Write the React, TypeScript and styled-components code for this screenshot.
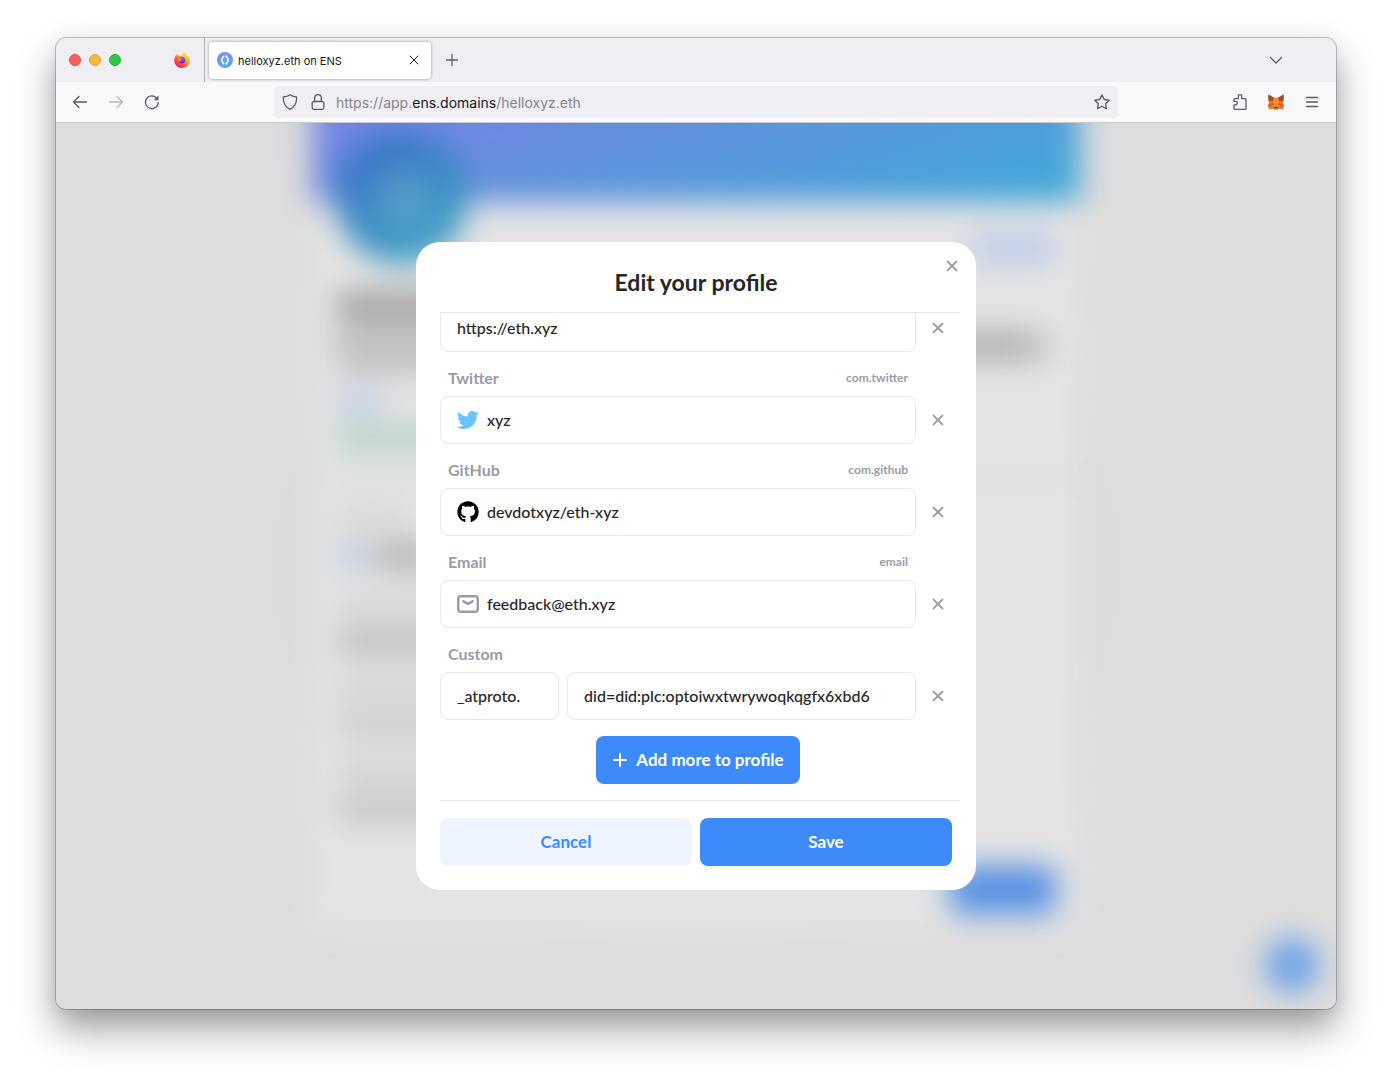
import React from 'react';
import styled, { createGlobalStyle } from 'styled-components';
import { FaGithub, FaTwitter } from 'react-icons/fa';

const GlobalStyle = createGlobalStyle`
  *, *::before, *::after { box-sizing: border-box; }
  body { margin: 0; background: #fff; }
  button, input { font: inherit; color: inherit; }
`;

const uiFont = `Inter, "Liberation Sans", sans-serif`;
const brandFont = `Lato, Inter, sans-serif`;

/* ---------- browser window ---------- */

const Desktop = styled.div`
  display: flex;
  min-height: 100vh;
  padding: 38px 56px 74px;
  font-family: ${uiFont};
`;

const Window = styled.div`
  flex: 1;
  min-width: 0;
  display: flex;
  flex-direction: column;
  overflow: hidden;
  border-radius: 10px;
  background: #ddd;
  box-shadow:
    0 0 0 1px rgba(0, 0, 0, 0.22),
    0 4px 20px rgba(0, 0, 0, 0.08),
    0 20px 38px rgba(0, 0, 0, 0.38);
`;

const TabStrip = styled.div`
  display: flex;
  align-items: center;
  height: 44px;
  background: #efeef3;
  color: #5b5b66;
`;

const TrafficLights = styled.div`
  display: flex;
  gap: 8px;
  padding-left: 13px;
`;

const Light = styled.button<{ $fill: string; $edge: string }>`
  width: 12px;
  height: 12px;
  padding: 0;
  border: 1px solid ${(p) => p.$edge};
  border-radius: 50%;
  background: ${(p) => p.$fill};
`;

const PinnedTab = styled.button`
  display: flex;
  align-items: center;
  justify-content: center;
  align-self: stretch;
  width: 46px;
  margin-left: 38px;
  padding: 0;
  border: 0;
  border-right: 1px solid #b4b3b9;
  margin-right: 4px;
  background: none;
`;

const ActiveTab = styled.div`
  display: flex;
  align-items: center;
  gap: 5px;
  width: 222px;
  height: 37px;
  padding: 0 8px;
  border-radius: 4px;
  background: #fff;
  box-shadow: 0 0 3px rgba(0, 0, 0, 0.4);
  color: #15141a;
  font-size: 11px;
  line-height: 16px;
`;

const TabTitle = styled.span`
  flex: 1;
  padding-top: 2px;
  white-space: nowrap;
`;

const ChromeButton = styled.button<{ $w?: number; $dim?: boolean }>`
  display: flex;
  align-items: center;
  justify-content: center;
  flex: none;
  width: ${(p) => p.$w ?? 36}px;
  height: 32px;
  padding: 0;
  border: 0;
  background: none;
  color: inherit;
  opacity: ${(p) => (p.$dim ? 0.4 : 1)};
`;

const TabListSlot = styled.div`
  display: flex;
  margin-left: auto;
  padding-right: 42px;
`;

const Toolbar = styled.div`
  display: flex;
  align-items: center;
  height: 41px;
  padding: 0 6px;
  border-bottom: 1px solid #c9c9cc;
  background: #f9f9fb;
  color: #5b5b66;
`;

const Spacer = styled.div`
  flex: 0 1 104px;
`;

const AddressBar = styled.div`
  display: flex;
  align-items: center;
  flex: 1;
  min-width: 0;
  height: 32px;
  padding: 0 0 0 2px;
  border-radius: 4px;
  background: #f0eff4;
`;

const Address = styled.div`
  flex: 1;
  padding: 2px 0 0 4px;
  outline: 0;
  color: #85848b;
  font-size: 14px;
  line-height: 20px;
  white-space: nowrap;
  strong { color: #15141a; font-weight: 400; }
`;

/* ---------- page behind the dialog ---------- */

const Viewport = styled.main`
  position: relative;
  flex: 1;
  display: flex;
  align-items: center;
  justify-content: center;
  overflow: hidden;
  background: radial-gradient(ellipse at center, #d9dadd 30%, #dbdcde 45%, #dddedd 58%, #dddddd 62%);
`;

const Backdrop = styled.div`
  position: absolute;
  inset: 0;
  display: flex;
  justify-content: center;
  align-items: flex-start;
  overflow: hidden;
`;

const Sheet = styled.div`
  display: flex;
  flex-direction: column;
  width: 768px;
  margin-top: -60px;
  background: #e4e4e4;
  filter: blur(15px);
`;

const Banner = styled.div`
  height: 139px;
  background: linear-gradient(160deg, #7a80e2 0%, #6b8adf 32%, #5698dc 62%, #3fa9d6 100%);
`;

const SheetRow = styled.div<{ $h: number; $mt?: number; $align?: string }>`
  display: flex;
  align-items: ${(p) => p.$align ?? 'center'};
  justify-content: space-between;
  height: ${(p) => p.$h}px;
  margin-top: ${(p) => p.$mt ?? 0}px;
  padding: 0 24px;
`;

const Avatar = styled.div`
  width: 132px;
  height: 132px;
  border-radius: 50%;
  background:
    radial-gradient(circle at 50% 50%, rgba(255, 255, 255, 0.2) 0, rgba(255, 255, 255, 0) 50%),
    linear-gradient(150deg, #3473c4 15%, #3a90c3 60%, #45a9c6 100%);
`;

const Smudge = styled.div<{ $w: number; $h: number; $c: string }>`
  width: ${(p) => p.$w}px;
  height: ${(p) => p.$h}px;
  border-radius: 8px;
  background: ${(p) => p.$c};
`;

const SheetDivider = styled.div`
  height: 12px;
  margin-top: 20px;
  background: #dcdde0;
`;

const HelpBubble = styled.div`
  position: absolute;
  right: 16px;
  bottom: 16px;
  width: 56px;
  height: 56px;
  border-radius: 50%;
  background: #74a5e8;
  filter: blur(14px);
`;

/* ---------- dialog ---------- */

const Dialog = styled.form`
  position: relative;
  width: 560px;
  max-width: 100%;
  border-radius: 24px;
  background: #fff;
  color: #262626;
  font-family: ${brandFont};
  font-size: 16px;
  line-height: 20px;
`;

const DialogTitle = styled.h1`
  margin: 0;
  padding: 24px 24px 14px;
  font-size: 23px;
  line-height: 32px;
  font-weight: 700;
  text-align: center;
`;

const IconButton = styled.button`
  display: flex;
  align-items: center;
  justify-content: center;
  width: 36px;
  height: 36px;
  padding: 0;
  border: 0;
  background: none;
  color: #9b9ba7;
`;

const DialogClose = styled(IconButton)`
  position: absolute;
  top: 6px;
  right: 6px;
`;

const Fields = styled.div`
  display: flex;
  flex-direction: column;
  justify-content: flex-end;
  gap: 16px;
  height: 489px;
  margin: 0 16px 0 24px;
  padding: 0 4px 16px 0;
  overflow: hidden;
  border: solid #e8e8e8;
  border-width: 1px 0;
`;

const Field = styled.div`
  flex: none;
  display: grid;
  grid-template-columns: 1fr 36px;
  column-gap: 4px;
  row-gap: 8px;
  align-items: center;
`;

const FieldHead = styled.div`
  display: flex;
  justify-content: space-between;
  grid-column: 1;
  padding: 0 8px;
  color: #9b9ba7;
  font-weight: 700;
`;

const RecordKey = styled.span`
  font-size: 12px;
`;

const Inputs = styled.div<{ $split?: boolean }>`
  grid-column: 1;
  display: grid;
  grid-template-columns: ${(p) => (p.$split ? '119px 1fr' : '1fr')};
  gap: 8px;
`;

const InputBox = styled.div`
  display: flex;
  align-items: center;
  gap: 8px;
  min-width: 0;
  height: 48px;
  padding: 0 16px;
  border: 1px solid #e8e8e8;
  border-radius: 8px;
  svg { flex: none; }
`;

const TextInput = styled.input`
  flex: 1;
  min-width: 0;
  width: 100%;
  padding: 0;
  border: 0;
  outline: 0;
  background: none;
  font-weight: 500;
`;

const Action = styled.button<{ $soft?: boolean }>`
  display: flex;
  align-items: center;
  justify-content: center;
  flex: none;
  gap: 8px;
  height: 48px;
  padding: 0 16px;
  border: 0;
  border-radius: 8px;
  background: ${(p) => (p.$soft ? '#eef5ff' : '#3d8bfb')};
  color: ${(p) => (p.$soft ? '#3d8bfb' : '#fff')};
  font-size: 17px;
  font-weight: 700;
`;

const AddAction = styled(Action)`
  align-self: center;
`;

const DialogFooter = styled.div`
  display: grid;
  grid-template-columns: 1fr 1fr;
  gap: 8px;
  padding: 17px 24px 24px;
`;

/* ---------- icons ---------- */

type StrokeProps = { d: string; size?: number; box?: number; width?: number };

const Stroke = ({ d, size = 16, box = 16, width = 1 }: StrokeProps) => (
  <svg width={size} height={size} viewBox={`0 0 ${box} ${box}`} fill="none" stroke="currentColor"
    strokeWidth={width} strokeLinecap="round" strokeLinejoin="round" aria-hidden="true">
    <path d={d} />
  </svg>
);

const Cross = () => <Stroke size={12} box={12} width={2} d="M1.6 1.6l8.8 8.8M10.4 1.6l-8.8 8.8" />;

const FirefoxLogo = () => (
  <svg width="16" height="16" viewBox="0 0 16 16" aria-hidden="true">
    <defs>
      <linearGradient id="ff-body" x1="0.85" y1="0.05" x2="0.2" y2="0.95">
        <stop offset="0" stopColor="#fff04f" />
        <stop offset="0.3" stopColor="#ffbd2e" />
        <stop offset="0.6" stopColor="#ff6a35" />
        <stop offset="1" stopColor="#f0107a" />
      </linearGradient>
      <linearGradient id="ff-globe" x1="0.7" y1="0" x2="0.3" y2="1">
        <stop offset="0" stopColor="#9059ff" />
        <stop offset="1" stopColor="#4a2fb8" />
      </linearGradient>
    </defs>
    <path fill="url(#ff-body)" d="M15.4 5.9c-.4-.9-1-1.6-1.6-2 .3.5.5 1 .5 1.400C13.400 3 11.500 2.300 10.800 0 9.200.9 8.600 2.300 8.500 3.400c-.9 0-1.800.3-2.500.8-.5-.2-.7-1-.5-1.800-1 .4-1.700 1.100-2.200 1.700-.4-.5-.4-1.700-.2-2.200C1.900 2.700.6 4.600.3 7c-.7 4.800 3 9 7.700 9 4.400 0 8-3.600 8-8 0-.8-.2-1.500-.6-2.100z" />
    <circle cx="8" cy="8.300" r="3.300" fill="url(#ff-globe)" />
    <path fill="#ff8a30" d="M3.600 6.200c1-.7 2.300-.4 3 .4.600.1 1 .1 1.500.3-.3.700-1.100.8-1.500 1.200-.2.600.3 1 1 1-.9.900-2.500.5-3.100-.5-.7-.7-1-1.500-.9-2.400z" />
  </svg>
);

const EnsLogo = () => (
  <svg width="16" height="16" viewBox="0 0 16 16" aria-hidden="true">
    <defs>
      <linearGradient id="ens-fill" x1="0.2" y1="0" x2="0.8" y2="1">
        <stop offset="0" stopColor="#7e8df5" />
        <stop offset="1" stopColor="#51aef2" />
      </linearGradient>
    </defs>
    <circle cx="8" cy="8" r="8" fill="url(#ens-fill)" />
    <path fill="none" stroke="#fff" strokeWidth="1.600" strokeLinecap="round" strokeLinejoin="round"
      d="M6.800 4.200C5.500 5.700 4.700 6.700 4.700 8s.8 2.300 2.100 3.800M9.200 4.200c1.300 1.500 2.100 2.500 2.100 3.800s-.8 2.300-2.100 3.800" />
  </svg>
);

const FoxLogo = () => (
  <svg width="16" height="16" viewBox="0 0 16 16" aria-hidden="true">
    <path fill="#ec7a2c" d="M.4.600 6 3.700h4L15.600.6v6.600l-.5 2.300.9 2.800-1.200 3.200-3.500-.8L9.600 16H6.400l-1.700-1.300-3.500.8L0 12.300l.9-2.800-.5-2.300z" />
    <path fill="#92502b" d="M.4.600 6 3.700 4.600 7.200.900 6.800.2 4.200zM15.600.6 10 3.700l1.400 3.500 3.700-.4.700-2.600z" />
    <path fill="#f58b30" d="M6 3.700h4l1.300 5.600-1.500 3.500H6.200L4.700 9.300z" />
    <path fill="#d8681f" d="M.9 9.500l3.100.3-.3 2.900-3.700-.4zM15.100 9.500l-3.100.3.300 2.900 3.700-.4z" />
    <path fill="#5d3a22" d="m4.200 9.200 1.900.9-1.600.6zM11.800 9.200l-1.900.9 1.600.6z" />
    <path fill="#201c1a" d="M6.700 12.900h2.600l.3 1.500H6.400z" />
    <path fill="#d6c4b5" d="M6.400 14.400h3.200l-.4 1.200H6.800z" />
  </svg>
);

const MailIcon = () => (
  <svg width="22" height="22" viewBox="0 0 22 22" fill="none" stroke="#9b9ba7" strokeWidth="2.400"
    strokeLinecap="round" strokeLinejoin="round" aria-hidden="true">
    <rect x="1.200" y="3.200" width="19.600" height="15.600" rx="2.500" />
    <path d="M6.200 8.200l4.800 2.700 4.800-2.700" />
  </svg>
);

/* ---------- content ---------- */

type RecordRow = { id: string; label?: string; recordKey?: string; value: string; icon?: React.ReactNode };

const records: RecordRow[] = [
  { id: 'url', value: 'https://eth.xyz' },
  { id: 'twitter', label: 'Twitter', recordKey: 'com.twitter', value: 'xyz', icon: <FaTwitter size={22} color="#68c5fb" /> },
  { id: 'github', label: 'GitHub', recordKey: 'com.github', value: 'devdotxyz/eth-xyz', icon: <FaGithub size={22} color="#000" /> },
  { id: 'email', label: 'Email', recordKey: 'email', value: 'feedback@eth.xyz', icon: <MailIcon /> },
];

const BlurredProfile = () => (
  <Backdrop aria-hidden="true">
    <Sheet>
      <Banner />
      <SheetRow $h={132} $mt={-70} $align="flex-end">
        <Avatar />
        <Smudge $w={86} $h={32} $c="#bccde8" />
      </SheetRow>
      <SheetRow $h={24} $mt={28}><Smudge $w={240} $h={24} $c="#9c9c9c" /></SheetRow>
      <SheetRow $h={60}>
        <Smudge $w={320} $h={56} $c="#c2c2c2" />
        <Smudge $w={130} $h={28} $c="linear-gradient(90deg, #acacac 100px, #e0e0e0 130px)" />
      </SheetRow>
      <SheetRow $h={28} $mt={12}><Smudge $w={46} $h={22} $c="#bccbe8" /></SheetRow>
      <SheetRow $h={28} $mt={8}><Smudge $w={180} $h={28} $c="#b8d5c7" /></SheetRow>
      <SheetDivider />
      <SheetRow $h={20} $mt={24}><Smudge $w={70} $h={14} $c="#cdcdcd" /></SheetRow>
      <SheetRow $h={36} $mt={10}>
        <Smudge $w={32} $h={24} $c="#b4cde0" />
        <Smudge $w={682} $h={26} $c="linear-gradient(90deg, #b0b0b0 44px, #e4e4e4 100px)" />
      </SheetRow>
      <SheetRow $h={24} $mt={20}><Smudge $w={110} $h={20} $c="#d3d3d3" /></SheetRow>
      <SheetRow $h={32} $mt={8}><Smudge $w={180} $h={26} $c="#bebebe" /></SheetRow>
      <SheetRow $h={24} $mt={20}><Smudge $w={130} $h={24} $c="#d2d2d2" /></SheetRow>
      <SheetRow $h={32} $mt={8}><Smudge $w={180} $h={24} $c="#cbcbcb" /></SheetRow>
      <SheetRow $h={24} $mt={20}><Smudge $w={110} $h={24} $c="#d0d0d0" /></SheetRow>
      <SheetRow $h={32} $mt={8}><Smudge $w={180} $h={24} $c="#c3c3c3" /></SheetRow>
      <SheetRow $h={62} $mt={40} $align="flex-start">
        <span />
        <Smudge $w={106} $h={48} $c="#5590e3" />
      </SheetRow>
    </Sheet>
    <HelpBubble />
  </Backdrop>
);

const EditProfileDialog = () => (
  <Dialog role="dialog" aria-labelledby="dialog-title" onSubmit={(e) => e.preventDefault()}>
    <DialogTitle id="dialog-title">Edit your profile</DialogTitle>
    <DialogClose type="button" aria-label="Close"><Cross /></DialogClose>
    <Fields>
      {records.map((r) => (
        <Field key={r.id}>
          {r.label && (
            <FieldHead>
              <label htmlFor={r.id}>{r.label}</label>
              <RecordKey>{r.recordKey}</RecordKey>
            </FieldHead>
          )}
          <Inputs>
            <InputBox>
              {r.icon}
              <TextInput id={r.id} defaultValue={r.value} aria-label={r.label ? undefined : 'Website'} spellCheck={false} />
            </InputBox>
          </Inputs>
          <IconButton type="button" aria-label="Remove"><Cross /></IconButton>
        </Field>
      ))}
      <Field>
        <FieldHead><label htmlFor="custom-key">Custom</label></FieldHead>
        <Inputs $split>
          <InputBox><TextInput id="custom-key" defaultValue="_atproto." spellCheck={false} /></InputBox>
          <InputBox>
            <TextInput aria-label="Custom value" defaultValue="did=did:plc:optoiwxtwrywoqkqgfx6xbd6" spellCheck={false} />
          </InputBox>
        </Inputs>
        <IconButton type="button" aria-label="Remove"><Cross /></IconButton>
      </Field>
      <AddAction type="button">
        <Stroke size={16} width={2} d="M8 2v12M2 8h12" />
        Add more to profile
      </AddAction>
    </Fields>
    <DialogFooter>
      <Action type="button" $soft>Cancel</Action>
      <Action type="submit">Save</Action>
    </DialogFooter>
  </Dialog>
);

export default function App() {
  return (
    <>
      <GlobalStyle />
      <Desktop>
        <Window>
          <TabStrip>
            <TrafficLights>
              <Light aria-label="Close window" $fill="#fe5f57" $edge="#e9473f" />
              <Light aria-label="Minimise window" $fill="#fdb93b" $edge="#e2a12f" />
              <Light aria-label="Zoom window" $fill="#31c546" $edge="#27aa35" />
            </TrafficLights>
            <PinnedTab aria-label="Firefox View"><FirefoxLogo /></PinnedTab>
            <ActiveTab>
              <EnsLogo />
              <TabTitle>helloxyz.eth on ENS</TabTitle>
              <ChromeButton $w={18} aria-label="Close tab"><Stroke d="M4 4l8 8M12 4l-8 8" /></ChromeButton>
            </ActiveTab>
            <ChromeButton $w={42} aria-label="New tab"><Stroke width={1.3} d="M8 2.500v11M2.500 8h11" /></ChromeButton>
            <TabListSlot>
              <ChromeButton aria-label="List all tabs"><Stroke width={1.3} d="M2.500 5.500L8 11l5.500-5.500" /></ChromeButton>
            </TabListSlot>
          </TabStrip>
          <Toolbar>
            <ChromeButton aria-label="Back"><Stroke width={1.3} d="M1.500 8h13M7 2.500L1.500 8 7 13.500" /></ChromeButton>
            <ChromeButton aria-label="Forward" $dim><Stroke width={1.3} d="M14.500 8h-13M9 2.500L14.500 8 9 13.500" /></ChromeButton>
            <ChromeButton aria-label="Reload">
              <svg width="16" height="16" viewBox="0 0 16 16" fill="none" stroke="currentColor" strokeWidth="1.300" strokeLinecap="round" aria-hidden="true">
                <path d="M14.300 8.500A6.400 6.400 0 1 1 12.600 4" />
                <path d="M14.500 1.500v4.700H9.800z" fill="currentColor" stroke="none" />
              </svg>
            </ChromeButton>
            <Spacer />
            <AddressBar>
              <ChromeButton $w={28} aria-label="Tracking protection">
                <Stroke width={1.3} d="M8 .8c1.800 1.300 4.200 2 6.600 2.200C14.900 9 13 13 8 15.400 3 13 1.100 9 1.400 3 3.800 2.800 6.200 2.100 8 .8z" />
              </ChromeButton>
              <ChromeButton $w={28} aria-label="Site information">
                <Stroke width={1.3} d="M3.700 7.500h8.600a1.500 1.500 0 0 1 1.500 1.500v4.800a1.500 1.500 0 0 1-1.500 1.500H3.700a1.500 1.500 0 0 1-1.500-1.500V9a1.500 1.500 0 0 1 1.500-1.500zM4.700 7.500V4a3.300 3.300 0 0 1 6.600 0v3.500" />
              </ChromeButton>
              <Address role="textbox" aria-label="Address" contentEditable suppressContentEditableWarning spellCheck={false}>
                https://app.<strong>ens.domains</strong>/helloxyz.eth
              </Address>
              <ChromeButton $w={32} aria-label="Bookmark this page">
                <Stroke width={1.3} d="M8 .9l2.200 4.600 5 .7-3.600 3.500.8 5L8 12.300l-4.400 2.400.8-5L.8 6.200l5-.7z" />
              </ChromeButton>
            </AddressBar>
            <Spacer />
            <ChromeButton aria-label="Extensions">
              <Stroke width={1.3} d="M2 14.300V10.800h1.600a1.700 1.700 0 0 0 0-3.500H2V5.500a.9.900 0 0 1 .9-.9h3.400V2.400a1.700 1.700 0 0 1 3.400 0v2.200h3.400a.9.900 0 0 1 .9.900v8.900a.9.900 0 0 1-.9.900H3a1 1 0 0 1-1-1z" />
            </ChromeButton>
            <ChromeButton aria-label="MetaMask"><FoxLogo /></ChromeButton>
            <ChromeButton aria-label="Menu"><Stroke width={1.3} d="M2.500 3.500h11M2.500 8h11M2.500 12.500h11" /></ChromeButton>
          </Toolbar>
          <Viewport>
            <BlurredProfile />
            <EditProfileDialog />
          </Viewport>
        </Window>
      </Desktop>
    </>
  );
}
